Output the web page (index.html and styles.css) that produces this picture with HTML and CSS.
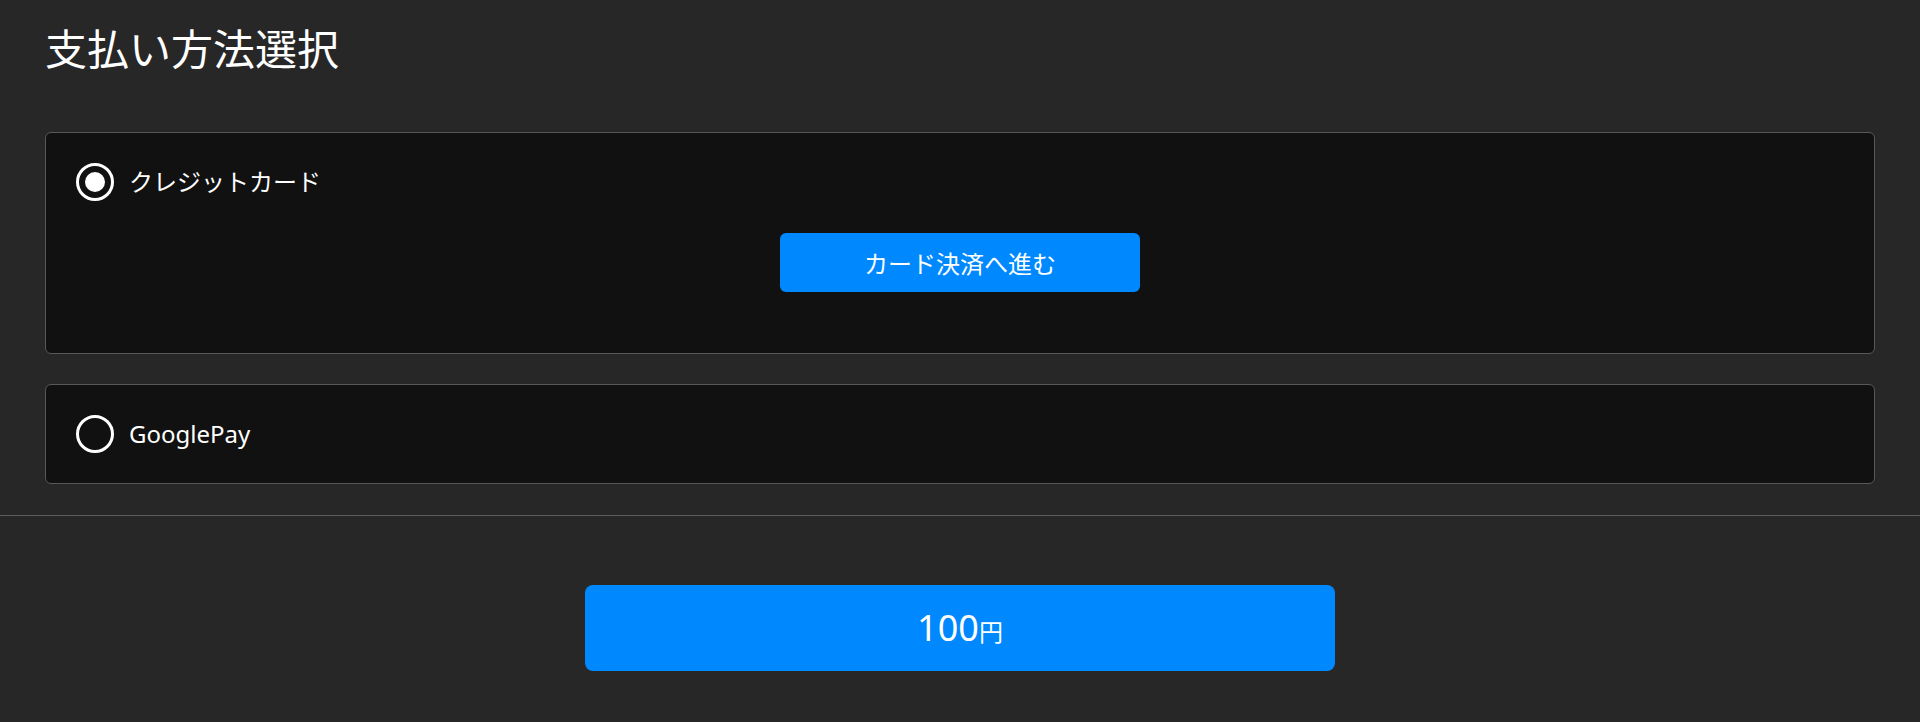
FILE: index.html
```html
<!DOCTYPE html>
<html lang="ja">
<head>
    <meta charset="UTF-8">
    <title>支払い方法選択</title>
    <link rel="stylesheet" href="styles.css">
</head>
<body>

    <main class="page">
        <h1 class="title">支払い方法選択</h1>

        <div class="methods">
            <div class="method">
                <label class="method-head">
                    <input type="radio" name="pay" value="card" checked>
                    <span>クレジットカード</span>
                </label>
                <button class="card-btn" type="button">カード決済へ進む</button>
            </div>

            <div class="method">
                <label class="method-head">
                    <input type="radio" name="pay" value="googlepay">
                    <span>GooglePay</span>
                </label>
            </div>
        </div>
    </main>

    <hr class="divider">

    <div class="footer">
        <button class="total-btn" type="button">
            <span class="price"><span class="amount">100</span><span class="unit">円</span></span>
        </button>
    </div>

</body>
</html>
```

FILE: styles.css
```css
body {
    margin: 0;
    background: #272727;
    color: #fff;
    font-family: "Noto Sans", "Noto Sans CJK JP", sans-serif;
}

.page {
    padding: 0 45px;
}

.title {
    margin: 0 0 52px;
    padding-top: 17px;
    font-size: 42px;
    line-height: 63px;
    font-weight: normal;
}

.methods {
    display: flex;
    flex-direction: column;
    gap: 30px;
}

.method {
    background: #111111;
    border: 1px solid #585858;
    border-radius: 6px;
    padding: 30px;
}

.method-head {
    display: flex;
    align-items: center;
    gap: 15px;
    font-size: 24px;
    line-height: 38px;
    cursor: pointer;
}

.method-head input {
    appearance: none;
    -webkit-appearance: none;
    margin: 0;
    width: 38px;
    height: 38px;
    border: 3px solid #fff;
    border-radius: 50%;
    display: flex;
    align-items: center;
    justify-content: center;
    flex-shrink: 0;
}

.method-head input:checked::after {
    content: "";
    width: 20px;
    height: 20px;
    border-radius: 50%;
    background: #fff;
}

.card-btn {
    display: block;
    width: 360px;
    height: 59px;
    margin: 32px auto 31px;
    border: none;
    border-radius: 6px;
    background: #0088ff;
    color: #fff;
    font-family: inherit;
    font-size: 24px;
    cursor: pointer;
}

.divider {
    margin: 31px 0 0;
    border: none;
    border-top: 1px solid #5e5e5e;
}

.footer {
    padding: 69px 0 50px;
}

.total-btn {
    display: flex;
    align-items: center;
    justify-content: center;
    width: 750px;
    height: 86px;
    margin: 0 auto;
    border: none;
    border-radius: 8px;
    background: #0088ff;
    color: #fff;
    font-family: inherit;
    cursor: pointer;
}

.price {
    display: flex;
    align-items: baseline;
}

.amount {
    font-size: 36px;
    line-height: 1;
}

.unit {
    font-size: 24px;
    line-height: 1;
}
```
